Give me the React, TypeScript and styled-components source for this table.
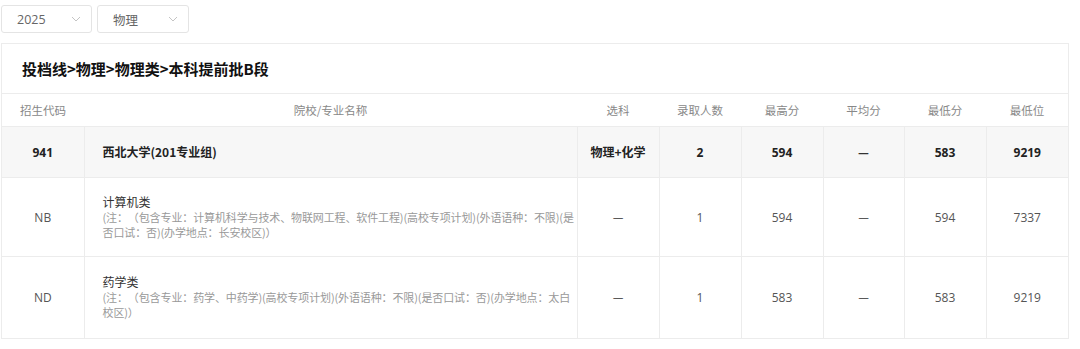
import React from "react";
import styled, { createGlobalStyle } from "styled-components";

const Global = createGlobalStyle`
  html, body { margin: 0; padding: 0; background: #fff; }
  body { font-family: "Open Sans", "Noto Sans CJK SC", sans-serif; }
`;

const Page = styled.div`
  padding: 5px 11px 0 1px;
  display: flex;
  flex-direction: column;
  gap: 10px;
`;

const Filters = styled.div`
  display: flex;
  gap: 5px;
`;

const Select = styled.div<{ $w: number }>`
  box-sizing: border-box;
  width: ${(p) => p.$w}px;
  height: 28px;
  border: 1px solid #e4e4e4;
  border-radius: 3px;
  display: flex;
  align-items: center;
  justify-content: space-between;
  padding: 0 10px 0 15px;
  font-size: 12.5px;
  color: #666;
`;

const SelectLabel = styled.span<{ $cjk?: boolean }>`
  font-family: ${(p) => (p.$cjk ? '"Noto Sans CJK SC", sans-serif' : '"Open Sans", sans-serif')};
`;

const Card = styled.div`
  box-sizing: border-box;
  width: 1068px;
  border: 1px solid #ececec;
  background: #fff;
`;

const Title = styled.div`
  height: 49px;
  display: flex;
  align-items: center;
  padding-left: 20px;
  border-bottom: 1px solid #ececec;
  font-family: "Noto Sans CJK SC", sans-serif;
  font-weight: 700;
  font-size: 15px;
  color: #111;
`;

const Table = styled.table`
  width: 100%;
  border-collapse: collapse;
  table-layout: fixed;
  font-family: "Open Sans", "Noto Sans CJK SC", sans-serif;
`;

const Th = styled.th`
  height: 32px;
  padding: 0;
  font-weight: 400;
  font-size: 11.5px;
  color: #888;
  text-align: center;
  border-bottom: 1px solid #ececec;
  font-family: "Noto Sans CJK SC", sans-serif;
`;

const Tr = styled.tr<{ $group?: boolean; $h: number }>`
  height: ${(p) => p.$h}px;
  background: ${(p) => (p.$group ? "#f7f7f7" : "#fff")};
  font-weight: ${(p) => (p.$group ? 700 : 400)};
  color: ${(p) => (p.$group ? "#222" : "#555")};
  &:not(:last-child) > td { border-bottom: 1px solid #ececec; }
`;

const Td = styled.td<{ $left?: boolean }>`
  padding: 0 0 0 ${(p) => (p.$left ? "18px" : "0")};
  text-align: ${(p) => (p.$left ? "left" : "center")};
  vertical-align: middle;
  font-size: 12px;
  border-left: 1px solid #ececec;
  &:first-child { border-left: none; }
`;

const Name = styled.div`
  font-family: "Noto Sans CJK SC", sans-serif;
  font-size: 12px;
  line-height: 16px;
  color: #333;
`;

const GroupName = styled.span`
  font-family: "Noto Sans CJK SC", sans-serif;
  font-size: 12px;
`;

const Note = styled.div`
  font-family: "Noto Sans CJK SC", sans-serif;
  font-size: 11px;
  line-height: 15px;
  color: #999;
  letter-spacing: -0.12px;
  text-spacing-trim: space-all;
`;

const Dash = styled.span`
  color: #333;
  font-family: "Noto Sans CJK SC", sans-serif;
`;

const Chevron = () => (
  <svg width="10" height="6" viewBox="0 0 10 6" fill="none">
    <path d="M1 1l4 4 4-4" stroke="#c4c4c4" strokeWidth="1" />
  </svg>
);

const widths = [82, 493, 82, 82, 82, 81, 82, 82];
const heads = ["招生代码", "院校/专业名称", "选科", "录取人数", "最高分", "平均分", "最低分", "最低位"];

type Row = {
  code: string;
  name: string;
  note?: string;
  subject: string;
  count: string;
  max: string;
  avg: string;
  min: string;
  rank: string;
  group?: boolean;
  h: number;
};

const rows: Row[] = [
  { code: "941", name: "西北大学(201专业组)", subject: "物理+化学", count: "2", max: "594", avg: "—", min: "583", rank: "9219", group: true, h: 51 },
  {
    code: "NB",
    name: "计算机类",
    note: "(注：（包含专业：计算机科学与技术、物联网工程、软件工程)(高校专项计划)(外语语种：不限)(是否口试：否)(办学地点：长安校区)）",
    subject: "—",
    count: "1",
    max: "594",
    avg: "—",
    min: "594",
    rank: "7337",
    h: 79,
  },
  {
    code: "ND",
    name: "药学类",
    note: "(注：（包含专业：药学、中药学)(高校专项计划)(外语语种：不限)(是否口试：否)(办学地点：太白校区)）",
    subject: "—",
    count: "1",
    max: "583",
    avg: "—",
    min: "583",
    rank: "9219",
    h: 81,
  },
];

const cell = (v: string) => (v === "—" ? <Dash>—</Dash> : v);

export default function App() {
  return (
    <>
      <Global />
      <Page>
        <Filters>
          <Select $w={91}>
            <SelectLabel>2025</SelectLabel>
            <Chevron />
          </Select>
          <Select $w={92}>
            <SelectLabel $cjk>物理</SelectLabel>
            <Chevron />
          </Select>
        </Filters>
        <Card>
          <Title>投档线&gt;物理&gt;物理类&gt;本科提前批B段</Title>
          <Table>
            <colgroup>
              {widths.map((w, i) => (
                <col key={i} style={{ width: w }} />
              ))}
            </colgroup>
            <thead>
              <tr>
                {heads.map((h) => (
                  <Th key={h}>{h}</Th>
                ))}
              </tr>
            </thead>
            <tbody>
              {rows.map((r) => (
                <Tr key={r.code} $group={r.group} $h={r.h}>
                  <Td>{r.code}</Td>
                  <Td $left>
                    {r.group ? (
                      <GroupName>{r.name}</GroupName>
                    ) : (
                      <>
                        <Name>{r.name}</Name>
                        <Note>{r.note}</Note>
                      </>
                    )}
                  </Td>
                  <Td>
                    {r.group ? <GroupName>{r.subject}</GroupName> : cell(r.subject)}
                  </Td>
                  <Td>{r.count}</Td>
                  <Td>{r.max}</Td>
                  <Td>{cell(r.avg)}</Td>
                  <Td>{r.min}</Td>
                  <Td>{r.rank}</Td>
                </Tr>
              ))}
            </tbody>
          </Table>
        </Card>
      </Page>
    </>
  );
}
